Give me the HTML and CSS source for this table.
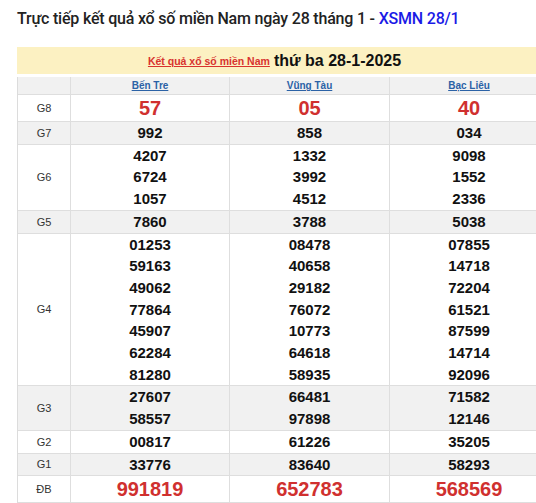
FILE: index.html
```html
<!DOCTYPE html>
<html lang="vi">
<head>
<meta charset="utf-8">
<link rel="stylesheet" href="styles.css">
</head>
<body>
<div class="page">
  <h1 class="title">Trực tiếp kết quả xổ số miền Nam ngày 28 tháng 1 - <span class="title-link">XSMN 28/1</span></h1>
  <div class="banner"><a class="banner-link" href="#">Kết quả xổ số miền Nam</a> <span class="banner-date">thứ ba 28-1-2025</span></div>
  <div class="table">
    <div class="row row-gray row-head">
      <div class="cell label"></div>
      <div class="cell"><a class="prov" href="#">Bến Tre</a></div>
      <div class="cell"><a class="prov" href="#">Vũng Tàu</a></div>
      <div class="cell"><a class="prov" href="#">Bạc Liêu</a></div>
    </div>
    <div class="row row-big">
      <div class="cell label">G8</div>
      <div class="cell red">57</div>
      <div class="cell red">05</div>
      <div class="cell red">40</div>
    </div>
    <div class="row row-gray">
      <div class="cell label">G7</div>
      <div class="cell num">992</div>
      <div class="cell num">858</div>
      <div class="cell num">034</div>
    </div>
    <div class="row">
      <div class="cell label">G6</div>
      <div class="cell num">4207<br>6724<br>1057</div>
      <div class="cell num">1332<br>3992<br>4512</div>
      <div class="cell num">9098<br>1552<br>2336</div>
    </div>
    <div class="row row-gray">
      <div class="cell label">G5</div>
      <div class="cell num">7860</div>
      <div class="cell num">3788</div>
      <div class="cell num">5038</div>
    </div>
    <div class="row">
      <div class="cell label">G4</div>
      <div class="cell num">01253<br>59163<br>49062<br>77864<br>45907<br>62284<br>81280</div>
      <div class="cell num">08478<br>40658<br>29182<br>76072<br>10773<br>64618<br>58935</div>
      <div class="cell num">07855<br>14718<br>72204<br>61521<br>87599<br>14714<br>92096</div>
    </div>
    <div class="row row-gray">
      <div class="cell label">G3</div>
      <div class="cell num">27607<br>58557</div>
      <div class="cell num">66481<br>97898</div>
      <div class="cell num">71582<br>12146</div>
    </div>
    <div class="row">
      <div class="cell label">G2</div>
      <div class="cell num">00817</div>
      <div class="cell num">61226</div>
      <div class="cell num">35205</div>
    </div>
    <div class="row row-gray">
      <div class="cell label">G1</div>
      <div class="cell num">33776</div>
      <div class="cell num">83640</div>
      <div class="cell num">58293</div>
    </div>
    <div class="row row-big">
      <div class="cell label">ĐB</div>
      <div class="cell red">991819</div>
      <div class="cell red">652783</div>
      <div class="cell red">568569</div>
    </div>
  </div>
</div>
</body>
</html>
```

FILE: styles.css
```css
html, body {
  margin: 0;
  padding: 0;
  overflow: hidden;
  background: #fff;
}
.page {
  width: 531px;
  margin-left: 17px;
  padding-top: 9px;
}
.title {
  margin: 0;
  font-family: Roboto, "Liberation Sans", sans-serif;
  font-weight: 500;
  font-size: 16px;
  letter-spacing: -0.2px;
  line-height: 20px;
  color: #222;
  white-space: nowrap;
}
.title-link {
  color: #1a1ae6;
}
.banner {
  margin-top: 18px;
  height: 27px;
  background: #fcf1c2;
  display: flex;
  align-items: center;
  justify-content: center;
  gap: 4px;
  padding-right: 16px;
  font-family: "Liberation Sans", Arial, sans-serif;
}
.banner-link {
  color: #d8332f;
  font-size: 10.5px;
  font-weight: bold;
  text-decoration: underline;
}
.banner-date {
  color: #111;
  font-size: 16px;
  font-weight: bold;
}
.table {
  margin-top: 3px;
  border-left: 1px solid #dcdcdc;
  font-family: "Liberation Sans", Arial, sans-serif;
}
.row {
  display: grid;
  grid-template-columns: 52px 159px 160px 159px;
  border-bottom: 1px solid #dedede;
}
.row-gray {
  background: #f1f1f1;
}
.cell {
  border-left: 1px solid #dedede;
  display: flex;
  flex-direction: column;
  align-items: center;
  justify-content: center;
  text-align: center;
}
.cell.label {
  border-left: none;
  font-size: 11px;
  color: #333;
}
.row-head .cell {
  height: 17px;
}
.prov {
  font-size: 10px;
  font-weight: bold;
  color: #2b62a6;
  text-decoration: underline;
}
.num {
  display: block;
  font-size: 15px;
  font-weight: bold;
  line-height: 21.7px;
  color: #111;
}
.row-big .cell {
  height: 26px;
}
.red {
  font-size: 20px;
  font-weight: bold;
  color: #d0302f;
}
```
